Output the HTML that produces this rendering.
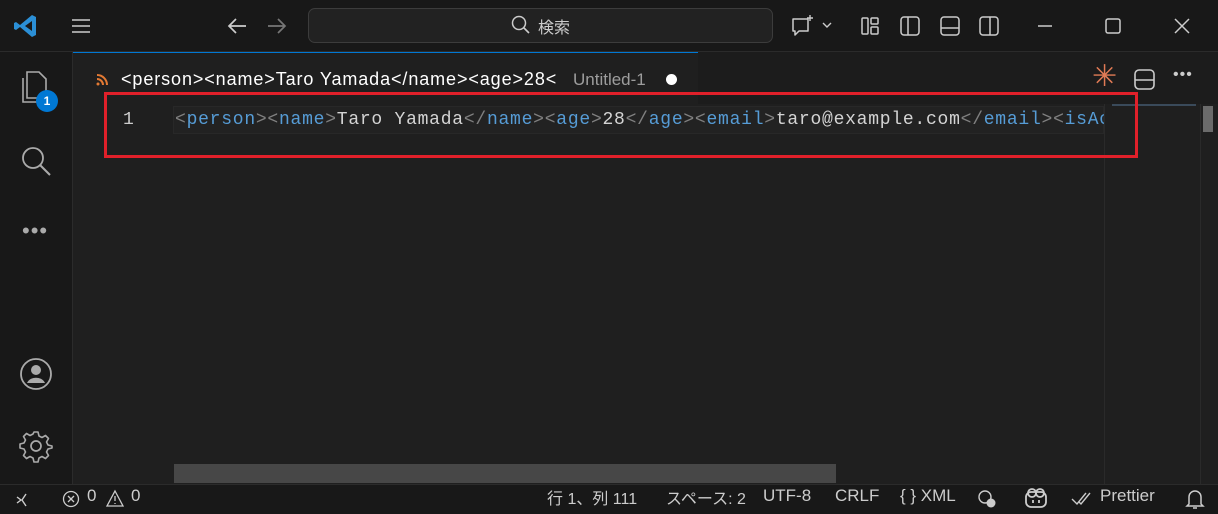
<!DOCTYPE html>
<html><head><meta charset="utf-8"><style>
*{margin:0;padding:0;box-sizing:border-box}
body{width:1218px;height:514px;background:#181818;overflow:hidden;position:relative;font-family:"Liberation Sans","Noto Sans CJK JP",sans-serif;color:#ccc}
.a{position:absolute}
.code{font-family:"Liberation Mono","DejaVu Sans Mono",monospace;font-size:18px;letter-spacing:0.75px;white-space:pre}
.t{color:#808080}.n{color:#569cd6}.x{color:#d4d4d4}
.sb{font-size:17px;color:#ccc;top:486px;white-space:nowrap}
svg{position:absolute}
</style></head><body>
<div class="a" style="left:0;top:0;width:1218px;height:52px;background:#181818;border-bottom:1px solid #2b2b2b"></div>
<svg style="left:12px;top:12px" width="28" height="28" viewBox="0 0 28 28"><path d="M20 3 L24 5 V23 L20 25 L8 15 L4 18 L2 17 V11 L4 10 L8 13 Z M20 9 L13 14 L20 19 Z" fill="#2b8fd6"/></svg>
<svg style="left:71px;top:17px" width="20" height="18"><path d="M1 3H19M1 9H19M1 15H19" stroke="#ccc" stroke-width="1.6"/></svg>
<svg style="left:226px;top:16px" width="22" height="20"><path d="M20 10H3M10 3L3 10L10 17" stroke="#ccc" stroke-width="1.7" fill="none"/></svg>
<svg style="left:266px;top:16px" width="22" height="20"><path d="M2 10H19M12 3L19 10L12 17" stroke="#777" stroke-width="1.7" fill="none"/></svg>
<div class="a" style="left:308px;top:8px;width:465px;height:35px;border:1px solid #3c3c3c;border-radius:7px;background:#222"></div>
<svg style="left:510px;top:14px" width="22" height="22"><circle cx="9" cy="9" r="6.5" stroke="#ccc" stroke-width="1.5" fill="none"/><path d="M14 14L19 19" stroke="#ccc" stroke-width="1.6"/></svg>
<div class="a" style="left:538px;top:14px;font-size:16px;color:#ccc">検索</div>
<svg style="left:790px;top:14px" width="48" height="24"><path d="M3 5H18V17H9L5 21V17H3Z" stroke="#ccc" stroke-width="1.5" fill="none" stroke-linejoin="round"/><path d="M20 1V7M17 4H23" stroke="#ccc" stroke-width="1.4"/><path d="M33 9L37 13L41 9" stroke="#ccc" stroke-width="1.4" fill="none"/></svg>
<svg style="left:860px;top:16px" width="160" height="22"><g stroke="#ccc" stroke-width="1.5" fill="none"><rect x="2" y="2" width="6" height="16" rx="1"/><rect x="11" y="2" width="7" height="6" rx="1"/><rect x="11" y="11" width="7" height="7" rx="1"/><rect x="41" y="1" width="18" height="18" rx="3"/><path d="M48 1V19"/><rect x="81" y="1" width="18" height="18" rx="3"/><path d="M81 12H99"/><rect x="120" y="1" width="18" height="18" rx="3"/><path d="M130 1V19"/></g></svg>
<svg style="left:1030px;top:14px" width="170" height="26"><g stroke="#ccc" stroke-width="1.5" fill="none"><path d="M8 12H22"/><rect x="76" y="5" width="14" height="14" rx="2"/><path d="M145 5L159 19M159 5L145 19"/></g></svg>
<div class="a" style="left:72px;top:52px;width:1px;height:432px;background:#2b2b2b"></div>
<svg style="left:18px;top:68px" width="40" height="44"><path d="M9 4H21L28 11V30H9Z" stroke="#aaa" stroke-width="1.6" fill="none"/><path d="M5 10V34H22" stroke="#aaa" stroke-width="1.6" fill="none"/></svg>
<div class="a" style="left:36px;top:90px;width:22px;height:22px;border-radius:11px;background:#0078d4;color:#fff;font-size:12px;font-weight:bold;text-align:center;line-height:22px">1</div>
<svg style="left:18px;top:143px" width="36" height="36"><circle cx="15" cy="15" r="10" stroke="#aaa" stroke-width="1.8" fill="none"/><path d="M22 22L32 32" stroke="#aaa" stroke-width="2"/></svg>
<div class="a" style="left:22px;top:218px;font-size:22px;color:#aaa;letter-spacing:1px">•••</div>
<svg style="left:18px;top:356px" width="36" height="36"><circle cx="18" cy="18" r="15" stroke="#aaa" stroke-width="1.8" fill="none"/><circle cx="18" cy="14" r="5" fill="#aaa"/><path d="M9 27C12 20 24 20 27 27" fill="#aaa"/></svg>
<svg style="left:18px;top:428px" width="36" height="36"><circle cx="18" cy="18" r="5" stroke="#aaa" stroke-width="1.7" fill="none"/><path d="M16 4H20L21 8L24 9.5L27.5 7.5L30.5 10.5L28.5 14L30 17L34 18V20L30 21L28.5 24L30.5 27.5L27.5 30.5L24 28.5L21 30L20 34H16L15 30L12 28.5L8.5 30.5L5.5 27.5L7.5 24L6 21L2 20V16L6 15L7.5 12L5.5 8.5L8.5 5.5L12 7.5L15 6Z" stroke="#aaa" stroke-width="1.6" fill="none" stroke-linejoin="round"/></svg>
<div class="a" style="left:73px;top:52px;width:1145px;height:432px;background:#1f1f1f"></div>
<div class="a" style="left:73px;top:52px;width:1145px;height:52px;background:#1c1c1c"></div>
<div class="a" style="left:73px;top:52px;width:625px;height:52px;background:#1f1f1f;border-top:1px solid #0078d4"></div>
<svg style="left:96px;top:74px" width="12" height="12"><path d="M1 1A10 10 0 0 1 11 11M1 5A6 6 0 0 1 7 11" stroke="#e37933" stroke-width="2" fill="none"/><circle cx="2" cy="10" r="1.5" fill="#e37933"/></svg>
<div class="a" style="left:121px;top:69px;font-size:18px;letter-spacing:0.9px;color:#fff;white-space:nowrap">&lt;person&gt;&lt;name&gt;Taro Yamada&lt;/name&gt;&lt;age&gt;28&lt;</div>
<div class="a" style="left:573px;top:70px;font-size:17px;color:#9d9d9d">Untitled-1</div>
<div class="a" style="left:666px;top:74px;width:11px;height:11px;border-radius:6px;background:#fff"></div>
<div class="a" style="left:1092px;top:62px;font-size:30px;color:#e07a55;line-height:30px">✳</div>
<svg style="left:1133px;top:68px" width="24" height="24"><rect x="2" y="2" width="19" height="19" rx="4" stroke="#ccc" stroke-width="1.6" fill="none"/><path d="M2 12H21" stroke="#ccc" stroke-width="1.6"/></svg>
<div class="a" style="left:1173px;top:66px;font-size:16px;color:#ccc;letter-spacing:1px">•••</div>
<div class="a" style="left:173px;top:106px;width:931px;height:28px;border:1px solid #282828;background:#222"></div>
<div class="a code" style="left:123px;top:110px;color:#ccc">1</div>
<div class="a code" style="left:175px;top:110px"><span class="t">&lt;</span><span class="n">person</span><span class="t">&gt;&lt;</span><span class="n">name</span><span class="t">&gt;</span><span class="x">Taro Yamada</span><span class="t">&lt;/</span><span class="n">name</span><span class="t">&gt;&lt;</span><span class="n">age</span><span class="t">&gt;</span><span class="x">28</span><span class="t">&lt;/</span><span class="n">age</span><span class="t">&gt;&lt;</span><span class="n">email</span><span class="t">&gt;</span><span class="x">taro@example.com</span><span class="t">&lt;/</span><span class="n">email</span><span class="t">&gt;&lt;</span><span class="n">isAc</span></div>
<div class="a" style="left:1104px;top:104px;width:114px;height:380px;background:#1f1f1f;border-left:1px solid #2a2a2a"></div>
<div class="a" style="left:1112px;top:104px;width:84px;height:2px;background:#3a4a5a"></div>
<div class="a" style="left:1203px;top:106px;width:10px;height:26px;background:#6b6b6b"></div>
<div class="a" style="left:1200px;top:104px;width:1px;height:380px;background:#2a2a2a"></div>
<div class="a" style="left:174px;top:464px;width:662px;height:19px;background:#474747"></div>
<div class="a" style="left:104px;top:92px;width:1034px;height:66px;border:3px solid #e0202a"></div>
<div class="a" style="left:0;top:484px;width:1218px;height:30px;background:#181818;border-top:1px solid #2b2b2b"></div>
<svg style="left:14px;top:490px" width="22" height="20"><path d="M3 7L7 10L3 13M12 4L8 10L12 16" stroke="#ccc" stroke-width="1.4" fill="none"/></svg>
<svg style="left:62px;top:489px" width="20" height="20"><circle cx="9" cy="10" r="7.5" stroke="#ccc" stroke-width="1.3" fill="none"/><path d="M6 7L12 13M12 7L6 13" stroke="#ccc" stroke-width="1.3"/></svg>
<div class="a sb" style="left:87px">0</div>
<svg style="left:105px;top:489px" width="20" height="20"><path d="M10 2L18 17H2Z" stroke="#ccc" stroke-width="1.3" fill="none"/><path d="M10 7V12M10 14V15" stroke="#ccc" stroke-width="1.3"/></svg>
<div class="a sb" style="left:131px">0</div>
<div class="a sb" style="left:547px;top:485px;font-size:16px">行 1、列 111</div>
<div class="a sb" style="left:666px;top:485px;font-size:16px">スペース: 2</div>
<div class="a sb" style="left:763px">UTF-8</div>
<div class="a sb" style="left:835px">CRLF</div>
<div class="a sb" style="left:900px">{ } XML</div>
<svg style="left:976px;top:488px" width="22" height="22"><circle cx="9" cy="9" r="6" stroke="#ccc" stroke-width="1.4" fill="none"/><circle cx="15" cy="15" r="4.5" fill="#ccc"/></svg>
<svg style="left:1023px;top:486px" width="26" height="24"><rect x="3" y="6" width="20" height="15" rx="5" stroke="#ccc" stroke-width="1.8" fill="none"/><circle cx="9" cy="7" r="4" stroke="#ccc" stroke-width="1.8" fill="none"/><circle cx="17" cy="7" r="4" stroke="#ccc" stroke-width="1.8" fill="none"/><path d="M10 14V17M16 14V17" stroke="#ccc" stroke-width="1.8"/></svg>
<svg style="left:1071px;top:490px" width="26" height="18"><path d="M1 9L6 14L15 3M8 12L10 14L19 3" stroke="#ccc" stroke-width="1.4" fill="none"/></svg>
<div class="a sb" style="left:1100px">Prettier</div>
<svg style="left:1184px;top:487px" width="22" height="24"><path d="M5 17V10A6 6 0 0 1 17 10V17L19 19H3Z" stroke="#ccc" stroke-width="1.5" fill="none"/><path d="M9 21H13" stroke="#ccc" stroke-width="1.5"/></svg>
</body></html>
